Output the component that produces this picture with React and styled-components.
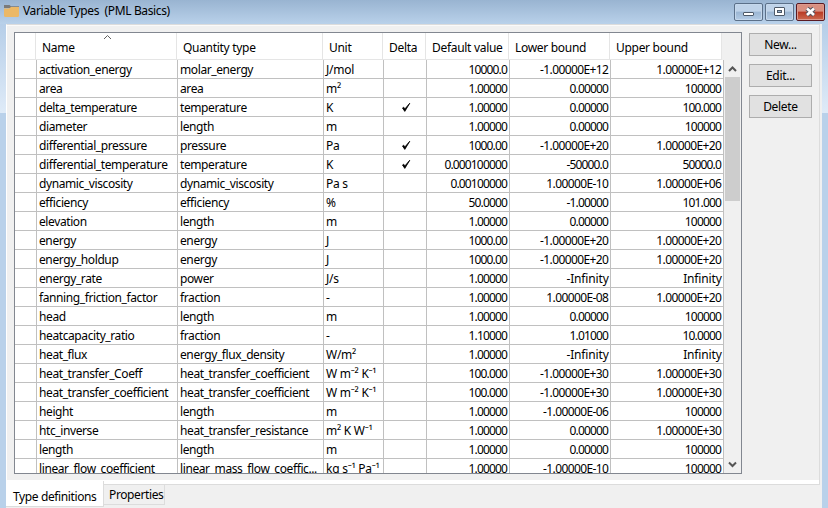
import React from "react";
import styled, { createGlobalStyle } from "styled-components";

const Global = createGlobalStyle`
  * { box-sizing: border-box; }
  body { margin: 0; overflow: hidden; }
`;

const Window = styled.div`
  width: 828px;
  height: 508px;
  overflow: hidden;
  display: flex;
  flex-direction: column;
  font-family: "Noto Sans", "Open Sans", sans-serif;
  font-size: 12px;
  letter-spacing: -0.3px;
  color: #000;
  background:
    linear-gradient(#b6cee8, #dfebf8) 0 24px / 100% 89px no-repeat,
    #b9d1ea;
`;

const TitleBar = styled.header`
  height: 24px;
  flex: none;
  display: flex;
  align-items: flex-start;
  padding: 3px 3px 0 4px;
  background: linear-gradient(#99b4d1, #b9d1ea);
`;

const Title = styled.h1`
  flex: 1;
  margin: 0 0 0 4px;
  font-size: 12px;
  font-weight: 400;
  line-height: 16px;
  letter-spacing: -0.37px;
  white-space: pre;
`;

const Controls = styled.div`
  display: flex;
  gap: 2px;
`;

const Control = styled.button`
  width: 29px;
  height: 18px;
  padding: 0;
  border: 1px solid ${(p) => (p.$close ? "#5a1a22" : "#5b7089")};
  border-radius: 2px;
  box-shadow: inset 0 0 0 1px ${(p) => (p.$close ? "#dc9a8e" : "#c5d8ec")};
  background: ${(p) =>
    p.$close
      ? "linear-gradient(#d98f80 0 45%, #b93a24 50%, #cc6a50)"
      : "linear-gradient(#bfd3e9 0 45%, #9bb6d3 50%, #b4cce6)"};
  svg { display: block; }
`;

const Client = styled.main`
  width: 816px;
  height: 484px;
  margin-left: 6px;
  flex: none;
  background: #f0f0f0;
`;

const Page = styled.section`
  height: 461px;
  width: 814px;
  display: flex;
  align-items: flex-start;
  border: 1px solid #dcdcdc;
  border-left-color: #fff;
  padding: 7px 0 0 7px;
  box-shadow: inset 0 -4px #fff, inset 0 1px #fafafa;
`;

const Table = styled.div`
  width: 728px;
  height: 442px;
  flex: none;
  border: 1px solid #828790;
  background: #fff;
  overflow: hidden;
`;

const Head = styled.div`
  position: relative;
  display: grid;
  grid-template-columns: 21px 141px 146px 60px 43px 83px 101px 112px 1fr;
  height: 27px;
`;

const HeadCell = styled.div`
  border-right: 1px solid #e5e5e5;
  border-bottom: 1px solid #e5e5e5;
  padding: 6px 0 0 6px;
  line-height: 17px;
  white-space: nowrap;
`;

const HeadEnd = styled.div`
  background: #f0f0f0;
`;

const SortMark = styled.svg`
  position: absolute;
  left: 88px;
  top: 1px;
`;

const Body = styled.div`
  display: flex;
  height: 413px;
`;

const Rows = styled.div`
  flex: none;
  width: 709px;
`;

const Row = styled.div`
  display: grid;
  grid-template-columns: 22px 141px 146px 60px 43px 83px 101px 113px;
  height: 19px;
`;

const Cell = styled.div`
  border-right: 1px solid #c0c0c0;
  border-bottom: 1px solid #c0c0c0;
  padding: 0 0 0 2px;
  line-height: 19px;
  height: 19px;
  white-space: pre;
  letter-spacing: -0.4px;
`;

const UnitCell = styled(Cell)`
  letter-spacing: -0.25px;
`;

const numberSpacing = { digits: -0.85, exponent: -0.62, word: -0.15 };

const NumberCell = styled(Cell)`
  text-align: right;
  letter-spacing: ${(p) => numberSpacing[p.$kind]}px;
  padding-right: ${(p) => 1.2 - numberSpacing[p.$kind]}px;
`;

const CheckCell = styled(Cell)`
  display: flex;
  justify-content: center;
  align-items: center;
`;

const ScrollBar = styled.div`
  flex: 1;
  display: flex;
  flex-direction: column;
  background: #f0f0f0;
`;

const Arrow = styled.svg`
  flex: none;
  display: block;
`;

const Thumb = styled.div`
  height: 124px;
  width: 15px;
  margin: 0 0 auto 1px;
  background: #cdcdcd;
`;

const Actions = styled.div`
  display: flex;
  flex-direction: column;
  gap: 8px;
  margin: 1px 0 0 7px;
`;

const ActionButton = styled.button`
  width: 63px;
  height: 23px;
  border: 1px solid #adadad;
  background: #e1e1e1;
  padding: 0;
  font: inherit;
  letter-spacing: inherit;
  line-height: 20px;
  color: #000;
`;

const Tabs = styled.nav`
  display: flex;
  align-items: flex-start;
`;

const Tab = styled.div`
  width: ${(p) => (p.$active ? 98 : 61)}px;
  height: ${(p) => (p.$active ? 26 : 20)}px;
  margin-top: ${(p) => (p.$active ? -4 : 0)}px;
  padding: ${(p) => (p.$active ? "7px 0 0 7px" : "1px 0 0 5px")};
  line-height: 17px;
  letter-spacing: -0.38px;
  white-space: nowrap;
  background: ${(p) => (p.$active ? "#fff" : "#f0f0f0")};
  border: solid #dcdcdc;
  border-width: 0 1px 1px 0;
`;

const data = [
  ["activation_energy", "molar_energy", "J/mol", 0, "10000.0", "-1.00000E+12", "1.00000E+12"],
  ["area", "area", "m²", 0, "1.00000", "0.00000", "100000"],
  ["delta_temperature", "temperature", "K", 1, "1.00000", "0.00000", "100.000"],
  ["diameter", "length", "m", 0, "1.00000", "0.00000", "100000"],
  ["differential_pressure", "pressure", "Pa", 1, "1000.00", "-1.00000E+20", "1.00000E+20"],
  ["differential_temperature", "temperature", "K", 1, "0.000100000", "-50000.0", "50000.0"],
  ["dynamic_viscosity", "dynamic_viscosity", "Pa s", 0, "0.00100000", "1.00000E-10", "1.00000E+06"],
  ["efficiency", "efficiency", "%", 0, "50.0000", "-1.00000", "101.000"],
  ["elevation", "length", "m", 0, "1.00000", "0.00000", "100000"],
  ["energy", "energy", "J", 0, "1000.00", "-1.00000E+20", "1.00000E+20"],
  ["energy_holdup", "energy", "J", 0, "1000.00", "-1.00000E+20", "1.00000E+20"],
  ["energy_rate", "power", "J/s", 0, "1.00000", "-Infinity", "Infinity"],
  ["fanning_friction_factor", "fraction", "-", 0, "1.00000", "1.00000E-08", "1.00000E+20"],
  ["head", "length", "m", 0, "1.00000", "0.00000", "100000"],
  ["heatcapacity_ratio", "fraction", "-", 0, "1.10000", "1.01000", "10.0000"],
  ["heat_flux", "energy_flux_density", "W/m²", 0, "1.00000", "-Infinity", "Infinity"],
  ["heat_transfer_Coeff", "heat_transfer_coefficient", "W m⁻² K⁻¹", 0, "100.000", "-1.00000E+30", "1.00000E+30"],
  ["heat_transfer_coefficient", "heat_transfer_coefficient", "W m⁻² K⁻¹", 0, "100.000", "-1.00000E+30", "1.00000E+30"],
  ["height", "length", "m", 0, "1.00000", "-1.00000E-06", "100000"],
  ["htc_inverse", "heat_transfer_resistance", "m² K W⁻¹", 0, "1.00000", "0.00000", "1.00000E+30"],
  ["length", "length", "m", 0, "1.00000", "0.00000", "100000"],
  ["linear_flow_coefficient", "linear_mass_flow_coeffic...", "kg s⁻¹ Pa⁻¹", 0, "1.00000", "-1.00000E-10", "100000"],
];

const kindOf = (text) =>
  text.includes("I") ? "word" : text.includes("E") ? "exponent" : "digits";

const Value = ({ text }) => <NumberCell $kind={kindOf(text)}>{text}</NumberCell>;

const Check = () => (
  <svg width="10" height="11" viewBox="0 0 10 11">
    <path d="M1.5 6 L3.8 9.4 L8.8 1.2 L4 6.8 L2.6 5.2Z" fill="#000" stroke="#000" strokeWidth=".8" />
  </svg>
);

export default function App() {
  return (
    <Window>
      <Global />
      <TitleBar>
        <svg width="15" height="16" viewBox="0 0 15 16">
          <path d="M0 2h5.5l1.5 1.2h8V5H0z" fill="#7b7b7b" />
          <path d="M0 5.5h5L7 4h8v8.5q0 1.5-1.5 1.5h-12Q0 14 0 12.5z" fill="#ebb866" />
        </svg>
        <Title>Variable Types  (PML Basics)</Title>
        <Controls>
          <Control aria-label="Minimize">
            <svg width="27" height="16"><rect x="8.5" y="8.5" width="10" height="3" rx=".5" fill="#fff" stroke="#4d5968" /></svg>
          </Control>
          <Control aria-label="Maximize">
            <svg width="27" height="16">
              <rect x="8.5" y="3.5" width="10" height="8" rx=".5" fill="#fff" stroke="#4d5968" />
              <rect x="11.5" y="6.5" width="4" height="2" fill="#9db7d3" stroke="#4d5968" />
            </svg>
          </Control>
          <Control $close aria-label="Close">
            <svg width="27" height="16">
              <path d="M10 4.5l7 6.5M17 4.5l-7 6.5" stroke="#54555f" strokeWidth="4.6" />
              <path d="M10 4.5l7 6.5M17 4.5l-7 6.5" stroke="#fff" strokeWidth="2.6" />
            </svg>
          </Control>
        </Controls>
      </TitleBar>
      <Client>
        <Page>
          <Table>
            <Head>
              <HeadCell />
              <HeadCell>Name</HeadCell>
              <HeadCell>Quantity type</HeadCell>
              <HeadCell>Unit</HeadCell>
              <HeadCell>Delta</HeadCell>
              <HeadCell>Default value</HeadCell>
              <HeadCell>Lower bound</HeadCell>
              <HeadCell>Upper bound</HeadCell>
              <HeadEnd />
              <SortMark width="9" height="6"><path d="M1 5l3.5-3.5L8 5" fill="none" stroke="#606060" /></SortMark>
            </Head>
            <Body>
              <Rows>
                {data.map((r) => (
                  <Row key={r[0]}>
                    <Cell />
                    <Cell>{r[0]}</Cell>
                    <Cell>{r[1]}</Cell>
                    <UnitCell>{r[2]}</UnitCell>
                    <CheckCell>{r[3] ? <Check /> : null}</CheckCell>
                    <Value text={r[4]} />
                    <Value text={r[5]} />
                    <Value text={r[6]} />
                  </Row>
                ))}
              </Rows>
              <ScrollBar>
                <Arrow width="17" height="17"><path d="M5 11l3.5-3.5L12 11" fill="none" stroke="#555" strokeWidth="2" /></Arrow>
                <Thumb />
                <Arrow width="17" height="17"><path d="M5 6.5l3.5 3.5L12 6.5" fill="none" stroke="#555" strokeWidth="2" /></Arrow>
              </ScrollBar>
            </Body>
          </Table>
          <Actions>
            <ActionButton>New...</ActionButton>
            <ActionButton>Edit...</ActionButton>
            <ActionButton>Delete</ActionButton>
          </Actions>
        </Page>
        <Tabs>
          <Tab $active>Type definitions</Tab>
          <Tab>Properties</Tab>
        </Tabs>
      </Client>
    </Window>
  );
}
